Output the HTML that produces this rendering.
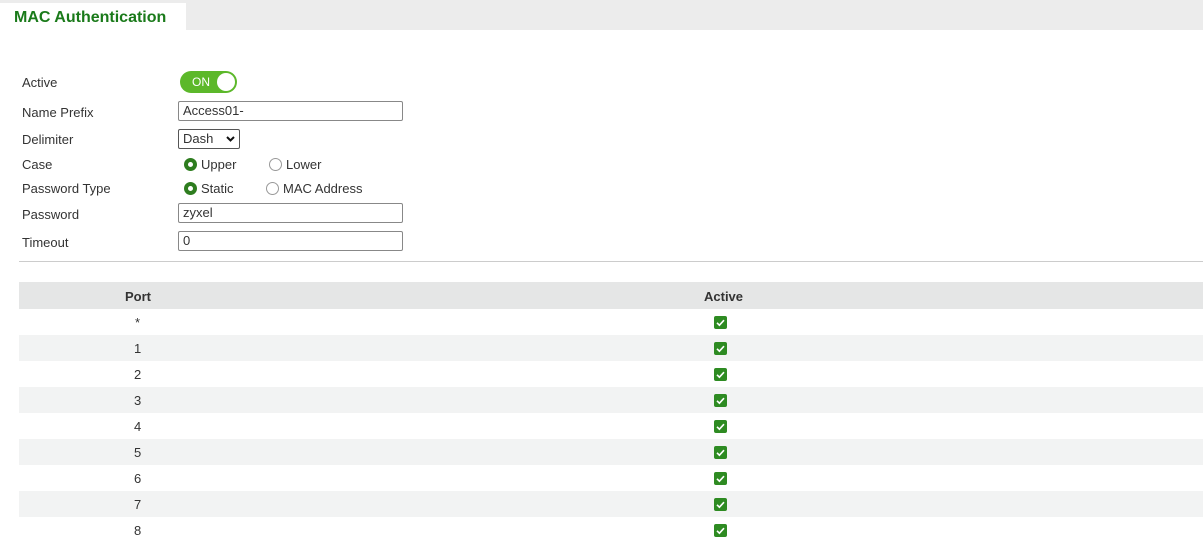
<!DOCTYPE html>
<html><head><style>
body{margin:0;width:1203px;height:545px;background:#fff;font-family:"Liberation Sans",sans-serif;font-size:13px;color:#333;position:relative;overflow:hidden}
.bar{position:absolute;left:0;top:0;width:1203px;height:30px;background:#ececec}
.tab{position:absolute;left:0;top:3px;width:186px;height:27px;background:#fff}
.tab span{position:absolute;left:14px;top:6px;font-size:16px;font-weight:bold;color:#1a7a1a}
.l{position:absolute;left:22px}
.in{position:absolute;left:178px;width:219px;height:18px;border:1px solid #888;border-radius:2px;padding-left:4px;line-height:18px;box-sizing:content-box}
.r{position:absolute;font-size:13px}
.rd{display:inline-block;width:13px;height:13px;border-radius:50%;box-sizing:border-box;vertical-align:-2px;margin-right:4px}
.on{border:4px solid #2e7d1f;background:#fff}
.off{border:1px solid #999}
.tbl{position:absolute;left:19px;top:282px;width:1184px}
.row{height:26px;position:relative}
.row span{position:absolute;top:6px}
.cb{position:absolute;left:695px;top:7px;width:13px;height:13px;background:#2e8b22;border-radius:2px}
</style></head><body>
<div class="bar"></div><div class="tab"><span>MAC Authentication</span></div>
<div class="l" style="top:75px">Active</div>
<div style="position:absolute;left:180px;top:71px;width:57px;height:22px;border-radius:11px;background:#5cb82a">
<span style="position:absolute;left:12px;top:4px;color:#fff;font-size:12px">ON</span>
<div style="position:absolute;right:2px;top:2px;width:18px;height:18px;border-radius:50%;background:#fff"></div></div>
<div class="l" style="top:105px">Name Prefix</div><div class="in" style="top:101px">Access01-</div>
<div class="l" style="top:132px">Delimiter</div>
<div style="position:absolute;left:178px;top:129px;width:62px;height:20px;border:1px solid #555;border-radius:2px;line-height:18px;padding-left:4px;box-sizing:border-box">Dash <svg style="position:absolute;right:4px;top:6px" width="9" height="6" viewBox="0 0 9 6"><path d="M1 1l3.5 3.5L8 1" stroke="#111" stroke-width="2" fill="none"/></svg></div>
<div class="l" style="top:157px">Case</div>
<div class="r" style="left:184px;top:157px"><span class="rd on"></span>Upper</div>
<div class="r" style="left:269px;top:157px"><span class="rd off"></span>Lower</div>
<div class="l" style="top:181px">Password Type</div>
<div class="r" style="left:184px;top:181px"><span class="rd on"></span>Static</div>
<div class="r" style="left:266px;top:181px"><span class="rd off"></span>MAC Address</div>
<div class="l" style="top:207px">Password</div><div class="in" style="top:203px">zyxel</div>
<div class="l" style="top:235px">Timeout</div><div class="in" style="top:231px">0</div>
<div style="position:absolute;left:19px;top:261px;width:1184px;height:1px;background:#ccc"></div>
<div class="tbl">
<div class="row" style="height:27px;background:#e5e6e6;font-weight:bold"><span style="left:106px;top:7px">Port</span><span style="left:685px;top:7px">Active</span></div>
<div class="row"><span style="left:116px">*</span><div class="cb"></div></div>
<div class="row" style="background:#f2f3f3"><span style="left:115px">1</span><div class="cb"></div></div>
<div class="row"><span style="left:115px">2</span><div class="cb"></div></div>
<div class="row" style="background:#f2f3f3"><span style="left:115px">3</span><div class="cb"></div></div>
<div class="row"><span style="left:115px">4</span><div class="cb"></div></div>
<div class="row" style="background:#f2f3f3"><span style="left:115px">5</span><div class="cb"></div></div>
<div class="row"><span style="left:115px">6</span><div class="cb"></div></div>
<div class="row" style="background:#f2f3f3"><span style="left:115px">7</span><div class="cb"></div></div>
<div class="row"><span style="left:115px">8</span><div class="cb"></div></div>
</div>
<script>
document.querySelectorAll('.cb').forEach(function(c){c.innerHTML='<svg width="13" height="13" viewBox="0 0 13 13"><path d="M3 6.8l2.4 2.4L10 4.2" stroke="#fff" stroke-width="1.6" fill="none"/></svg>';});
</script>
</body></html>
